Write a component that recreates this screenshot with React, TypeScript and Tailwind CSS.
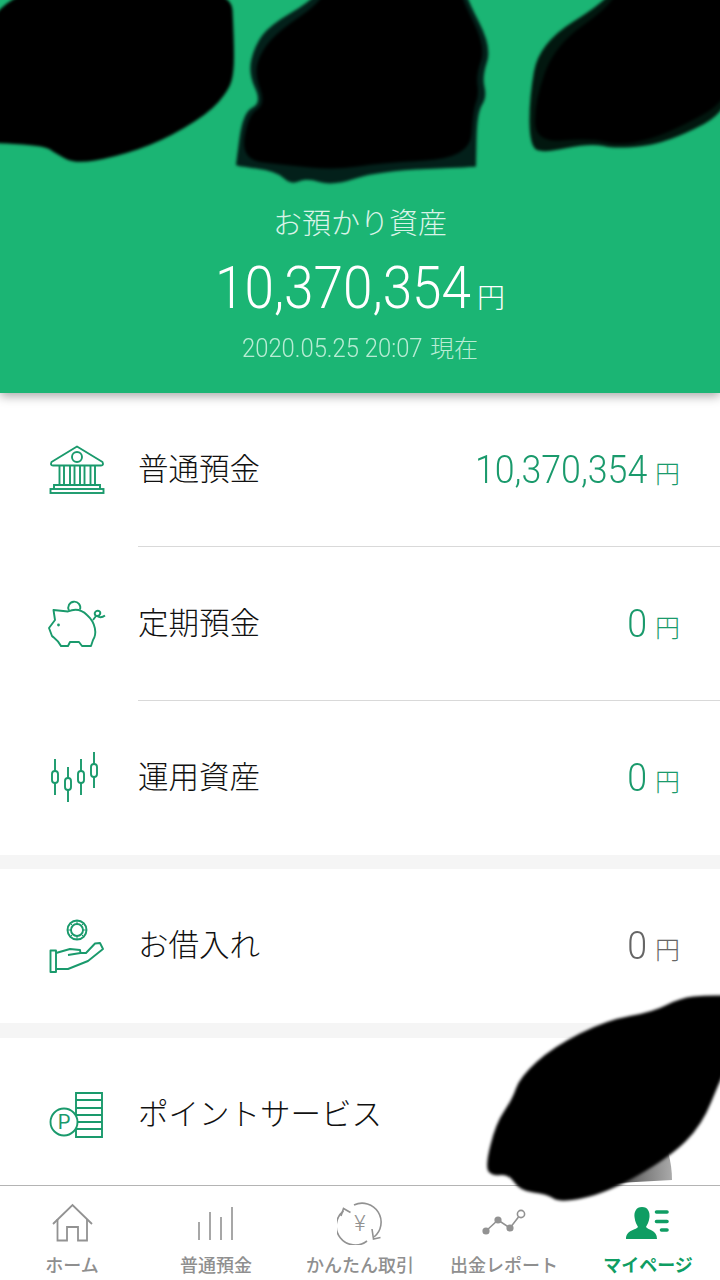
import type { ReactNode } from "react";

const G = "#1a9a6c";

function Bank() {
  return (
    <svg width="60" height="52" viewBox="47 443 60 52" fill="none" stroke={G} strokeWidth="1.9">
      <path d="M77 445.500 L102.500 461 Q104 464.500 101 464.500 H53 Q50 464.500 51.500 461 Z" strokeLinejoin="round" />
      <circle cx="77" cy="456" r="5" />
      <path d="M59.500 465 V484 M64 465 V484 M70 465 V484 M74.500 465 V484 M80 465 V484 M84.500 465 V484 M90.500 465 V484 M95 465 V484" />
      <path d="M54 488 V484 H100 V488" />
      <rect x="50.500" y="488" width="53" height="4" />
    </svg>
  );
}

function Piggy() {
  return (
    <svg width="60" height="52" viewBox="49 598 60 52" fill="none" stroke={G} strokeWidth="1.9" strokeLinejoin="round">
      <path d="M71 610.500 A6 6 0 1 1 82 609.500" />
      <path d="M55.500 610 L70 611.500 C78 608 84 610 89 615 C98 623 99 634 95 640 L93 646 L84 646 L81 642 L72 642 L70 646 L63 646 C60 640 56 638 54 636 L51 628 L57 620 Z" />
      <circle cx="60.500" cy="625" r="1.400" fill={G} stroke="none" />
      <path d="M95 620 L98 616 C95 613 98 610 101 611 C103.500 612.500 102 616 99 616 C102 618 105 617 107 615.500" />
    </svg>
  );
}

function Candles() {
  return (
    <svg width="60" height="56" viewBox="49 750 60 56" fill="none" stroke={G} strokeWidth="1.9">
      <path d="M57 759 V771 M57 783 V795 M70 767 V778 M70 790 V802 M83 759 V771 M83 783 V795 M96 752 V764 M96 777 V788" />
      <rect x="54" y="771" width="6" height="12" rx="3" />
      <rect x="67" y="778" width="6" height="12" rx="3" />
      <rect x="80" y="771" width="6" height="12" rx="3" />
      <rect x="93" y="764" width="6" height="13" rx="3" />
    </svg>
  );
}

function Loan() {
  return (
    <svg width="60" height="56" viewBox="47 918 60 56" fill="none" stroke={G} strokeWidth="1.9" strokeLinejoin="round">
      <circle cx="77" cy="930" r="9.500" />
      <circle cx="77" cy="930" r="6" />
      <path d="M77 920.500 V924 M77 936 V939.500 M67.500 930 H71 M83 930 H86.500 M70.300 923.300 L72.800 925.800 M81.200 934.200 L83.700 936.700 M83.700 923.300 L81.200 925.800 M72.800 934.200 L70.300 936.700" strokeWidth="1" />
      <rect x="50.500" y="950.500" width="5.500" height="21.500" />
      <path d="M56 953 L70 949 L80 950 L80.500 953 L68 955 M80.500 953 L86 953 L95 943.500 L100 943 L103 949 L88 961 L68 969 L56 969" />
    </svg>
  );
}

function Points() {
  return (
    <svg width="60" height="50" viewBox="47 1090 60 50" fill="none" stroke={G} strokeWidth="1.900">
      <path d="M76 1093 H102 V1137 H76 Z M76 1100 H102 M76 1108 H102 M76 1115 H102 M76 1122 H102 M76 1129 H102" />
      <circle cx="64" cy="1122" r="13.500" fill="#fff" />
      <text x="64" y="1129" textAnchor="middle" fontSize="20" fontFamily="Roboto" fill={G} stroke="none">P</text>
    </svg>
  );
}

const NG = "#929292";

function HomeIcon() {
  return (
    <svg width="44" height="42" viewBox="49 1202 44 42" fill="none" stroke={NG} strokeWidth="1.800">
      <path d="M52 1224 L71.500 1205 L91 1224" />
      <path d="M56.500 1219 V1240.500 H66 V1227 H77 V1240.500 H86 V1219" />
    </svg>
  );
}
function BarsIcon() {
  return (
    <svg width="44" height="42" viewBox="193 1202 44 42" fill="none" stroke={NG} strokeWidth="1.600">
      <path d="M198 1240 V1222 M209 1240 V1212 M220 1240 V1217 M231 1240 V1207" />
    </svg>
  );
}
function SwapIcon() {
  return (
    <svg width="46" height="44" viewBox="336 1200 46 44" fill="none" stroke={NG} strokeWidth="1.600">
      <path d="M342.500 1210 A19 19 0 0 0 366 1240" />
      <path d="M353 1204 A19 19 0 0 1 373 1236" />
      <path d="M340 1215 L342.500 1207.500 L349.500 1211.500" />
      <path d="M371 1228 L372.500 1238 L379.500 1236.500" />
      <text x="359" y="1230" textAnchor="middle" fontSize="22" fontFamily="Roboto" fontWeight="300" fill={NG} stroke="none">¥</text>
    </svg>
  );
}
function ReportIcon() {
  return (
    <svg width="46" height="30" viewBox="480 1208 46 30" fill="none" stroke={NG} strokeWidth="1.600">
      <path d="M485 1231 L497 1220 L509 1228 L517.500 1217" />
      <circle cx="485" cy="1231" r="2.800" fill={NG} />
      <circle cx="497" cy="1220" r="2.800" fill={NG} />
      <circle cx="509" cy="1228" r="2.800" fill={NG} />
      <circle cx="520" cy="1214" r="3.600" fill="#fff" />
    </svg>
  );
}
function MyIcon() {
  return (
    <svg width="46" height="34" viewBox="625 1205 46 34" fill="none">
      <path d="M642 1206 C648 1206 650 1211 649.500 1216 C649 1221 647 1224 646 1226 C648 1229 657 1229 657 1238 H626 C626 1229 636 1229 638 1226 C637 1224 635 1221 634.500 1216 C634 1211 636 1206 642 1206 Z" fill="#0f9d63" />
      <path d="M656.500 1211 H667 M656.500 1220.500 H667 M661.500 1229 H667" stroke="#0f9d63" strokeWidth="3.600" strokeLinecap="round" />
    </svg>
  );
}

function Row({ icon, label, amount, tone = "text-[#1a9a6c]", divider = false }: { icon: ReactNode; label: string; amount?: string; tone?: string; divider?: boolean }) {
  return (
    <div className="relative flex h-[154px] shrink-0 items-center bg-white">
      <div className="flex w-[138px] shrink-0 items-center pl-[47px]">{icon}</div>
      <div className="-mt-[1px] text-[30.500px] font-light text-[#111]">{label}</div>
      {amount && (
        <div className={`ml-auto flex items-baseline pr-[40px] ${tone}`}>
          <span className="origin-right scale-x-[0.94] text-[38px] font-light">{amount}</span>
          <span className="ml-[8px] text-[25px] font-light">円</span>
        </div>
      )}
      {divider && <div className="absolute bottom-0 left-[138px] right-0 h-px bg-[#d9d9d9]" />}
    </div>
  );
}

function Tab({ icon, label, active = false }: { icon: ReactNode; label: string; active?: boolean }) {
  return (
    <div className="flex flex-col items-center">
      <div className="flex h-[62px] items-center">{icon}</div>
      <div className={`-mt-[1px] text-[18px] leading-[26px] ${active ? "font-bold text-[#0f9d63]" : "font-medium text-[#8f8f8f]"}`}>{label}</div>
    </div>
  );
}

/* Smooth closed outline through a list of points, for the brush strokes. */
function smooth(pts: number[][]) {
  const mid = (a: number[], b: number[]) => [(a[0] + b[0]) / 2, (a[1] + b[1]) / 2];
  const start = mid(pts[pts.length - 1], pts[0]);
  let d = `M${start[0]} ${start[1]}`;
  pts.forEach((p, i) => {
    const m = mid(p, pts[(i + 1) % pts.length]);
    d += ` Q${p[0]} ${p[1]} ${m[0]} ${m[1]}`;
  });
  return d + " Z";
}

const blob1 = [[-20, -20], [231, -20], [234, 40], [234, 72], [229, 90], [208, 114], [160, 142], [115, 157], [75, 164], [55, 153], [45, 146], [0, 143], [-20, 143]];
const blob2o = [[325, -20], [313, 0], [270, 25], [255, 45], [248, 73], [262, 103], [243, 112], [236, 164], [236, 166], [276, 171], [291, 185], [306, 178], [333, 186], [378, 171], [476, 167], [476, 166], [477, 113], [487, 97], [482, 77], [492, 47], [465, -5], [465, -20]];
const blob2i = [[330, -20], [320, 3], [280, 30], [262, 50], [254, 73], [266, 104], [248, 115], [241, 160], [285, 165], [335, 170], [380, 163], [470, 158], [473, 110], [479, 95], [476, 75], [486, 47], [460, -5], [460, -20]];
const blob3o = [[615, -20], [608, 0], [539, 43], [529, 100], [530, 147], [544, 153], [590, 143], [617, 149], [668, 143], [740, 105], [740, -20]];
const blob3i = [[620, -20], [612, 5], [555, 45], [535, 100], [535, 143], [590, 138], [622, 146], [668, 134], [740, 94], [740, -20]];
const blob4 = [[707, 995], [740, 996], [740, 1040], [720, 1080], [702, 1125], [670, 1157], [607, 1193], [560, 1203], [547, 1194], [520, 1191], [509, 1174], [492, 1176], [485, 1167], [496, 1123], [512, 1100], [520, 1077], [553, 1047], [607, 1020], [653, 1012], [680, 998]];

export default function App() {
  return (
    <div className="relative flex h-[1280px] w-[720px] flex-col overflow-hidden bg-white font-['Roboto','Noto_Sans_CJK_JP',sans-serif]">
      <header className="relative z-10 flex h-[393px] shrink-0 flex-col items-center bg-[#1bb574] pt-[205px] shadow-[0_3px_10px_rgba(0,0,0,0.35)]">
        <div className="text-[29px] font-light leading-[38px] text-[#d9f3e7]">お預かり資産</div>
        <div className="mt-[6px] flex h-[78px] w-[290px] items-baseline leading-[78px] text-white">
          <span className="w-[262px] shrink-0 origin-left scale-x-[0.885] whitespace-nowrap text-[60px] font-light">10,370,354</span>
          <span className="text-[28px] font-light">円</span>
        </div>
        <div className="mt-[3px] flex w-[236px] items-baseline justify-between leading-[36px] text-[#b8ecd4]">
          <span className="w-[178px] shrink-0 origin-left scale-x-[0.915] whitespace-nowrap text-[26px] font-light">2020.05.25 20:07</span>
          <span className="text-[24px] font-light">現在</span>
        </div>
      </header>

      <main className="flex min-h-0 flex-1 flex-col overflow-hidden bg-[#f5f5f5]">
        <Row icon={<Bank />} label="普通預金" amount="10,370,354" divider />
        <Row icon={<Piggy />} label="定期預金" amount="0" divider />
        <Row icon={<Candles />} label="運用資産" amount="0" />
        <div className="mt-[14px] shrink-0">
          <Row icon={<Loan />} label="お借入れ" amount="0" tone="text-[#666]" />
        </div>
        <div className="mt-[15px] shrink-0">
          <Row icon={<Points />} label="ポイントサービス" />
        </div>
      </main>

      <nav className="grid h-[95px] shrink-0 grid-cols-5 border-t border-[#b4b4b4] bg-white pt-[6px]">
        <Tab icon={<HomeIcon />} label="ホーム" />
        <Tab icon={<BarsIcon />} label="普通預金" />
        <Tab icon={<SwapIcon />} label="かんたん取引" />
        <Tab icon={<ReportIcon />} label="出金レポート" />
        <Tab icon={<MyIcon />} label="マイページ" active />
      </nav>

      {/* hand-drawn black redactions painted over the screenshot */}
      <svg className="pointer-events-none absolute left-0 top-0 z-20" width="720" height="1280" viewBox="0 0 720 1280">
        <defs>
          <linearGradient id="smudge" x1="0" y1="0" x2="1" y2="0">
            <stop offset="0" stopColor="#333" />
            <stop offset="1" stopColor="#aaa" />
          </linearGradient>
        </defs>
        <path d="M600 1184 L668 1152 C671 1162 672 1172 672 1180 Z" fill="url(#smudge)" />
        <g className="blur-[1.500px]">
          <path d={smooth(blob1)} fill="#000" />
          <path d={smooth(blob2o)} fill="#03201a" />
          <path d={smooth(blob2i)} fill="#000" />
          <path d={smooth(blob3o)} fill="#02170f" />
          <path d={smooth(blob3i)} fill="#000" />
          <path d={smooth(blob4)} fill="#000" />
        </g>
      </svg>
    </div>
  );
}
